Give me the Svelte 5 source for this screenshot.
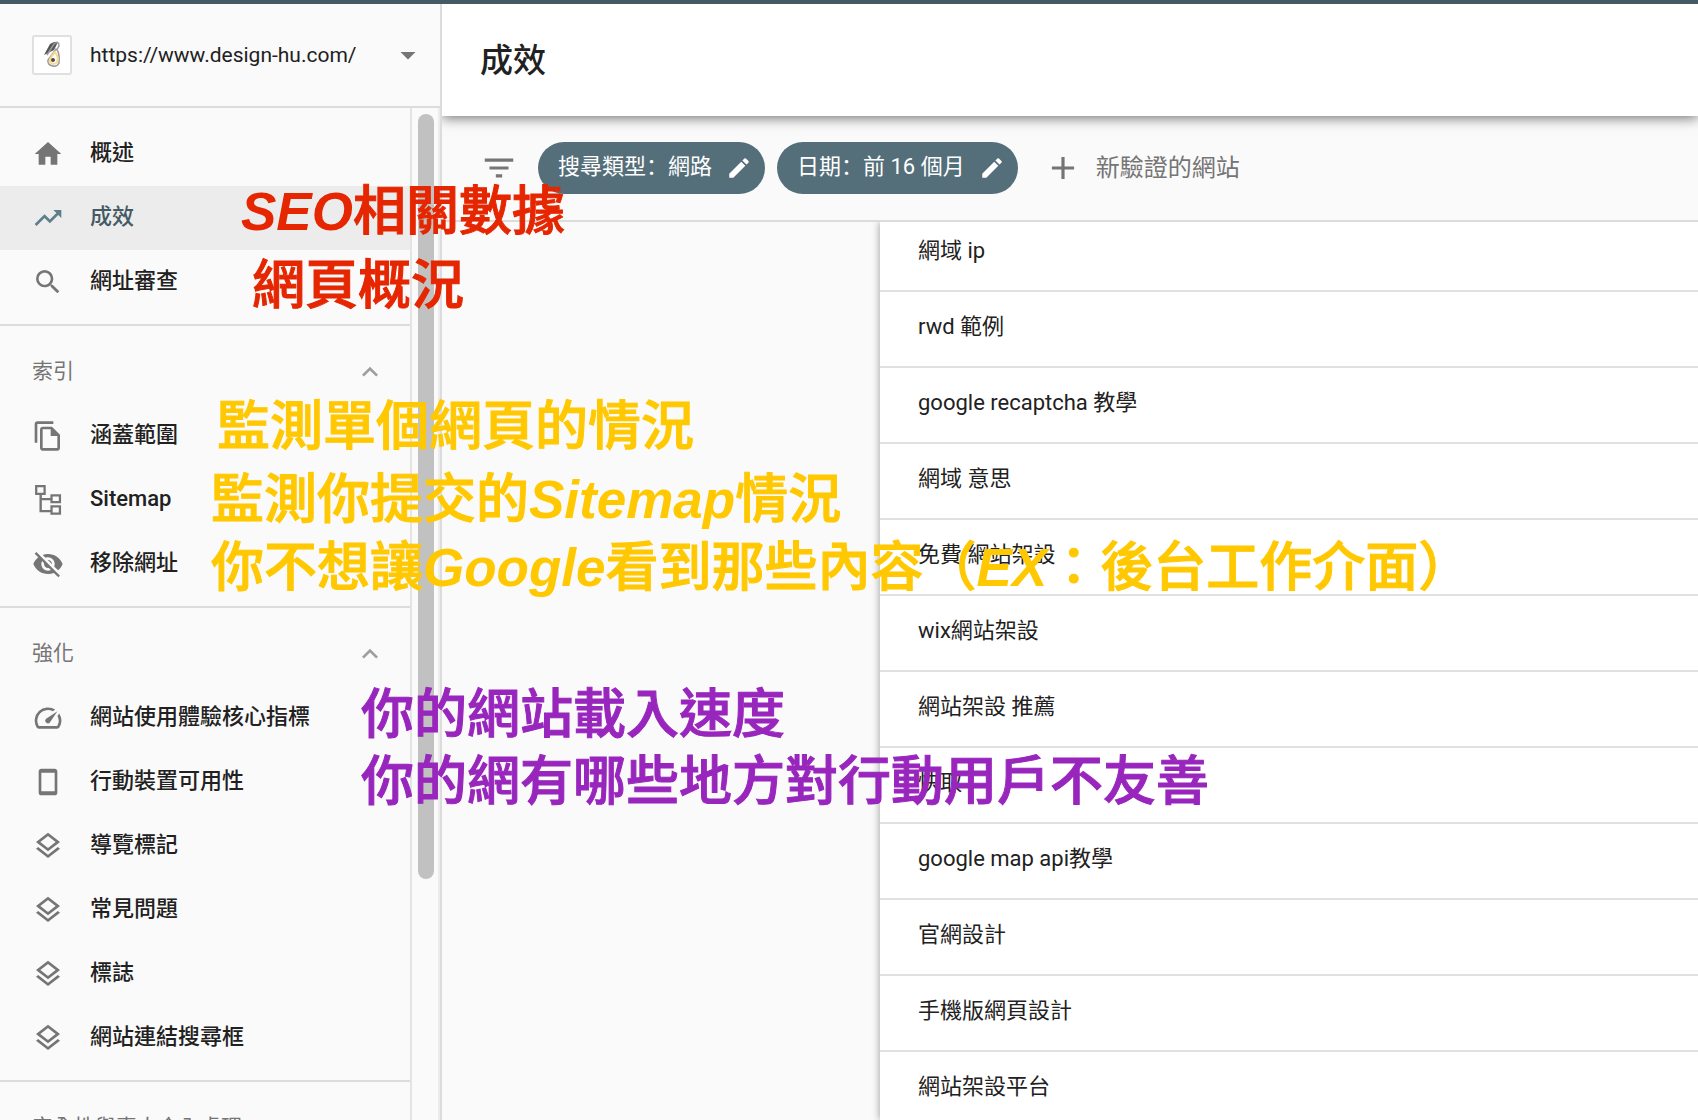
<script lang="ts">
	const icons = {
		home: 'M10 20v-6h4v6h5v-8h3L12 3 2 12h3v8z',
		trend: 'M16 6l2.29 2.29-4.88 4.88-4-4L2 16.59 3.41 18l6-6 4 4 6.3-6.29L22 12V6z',
		search:
			'M15.5 14h-.79l-.28-.27A6.47 6.47 0 0 0 16 9.5 6.5 6.5 0 1 0 9.5 16c1.61 0 3.09-.59 4.23-1.57l.27.28v.79l5 4.99L20.49 19l-4.99-5zm-6 0C7.01 14 5 11.99 5 9.5S7.01 5 9.5 5 14 7.01 14 9.5 11.99 14 9.5 14z',
		copy: 'M16 1H4c-1.1 0-2 .9-2 2v14h2V3h12V1zm-1 4H8c-1.1 0-1.99.9-1.99 2L6 21c0 1.1.89 2 1.99 2H19c1.1 0 2-.9 2-2V11l-6-6zm4 16H8V7h6v5h5v9z',
		tree: 'M2.3.8h8v7.4H7.4v2.3h6.4V7.7h8v6.7h-8v-2.2H7.4v7.3h6.4v-3.6h8V23h-8v-1.9H5.6V8.2H2.3zm1.7 1.7v4h4.6v-4zm11.5 6.9v3.3h4.6V9.4zm0 8.2v3.7h4.6v-3.7z',
		hidden:
			'M12 7c2.76 0 5 2.24 5 5 0 .65-.13 1.26-.36 1.83l2.92 2.92c1.51-1.26 2.7-2.89 3.43-4.75-1.73-4.39-6-7.5-11-7.5-1.4 0-2.74.25-3.98.7l2.16 2.16C10.74 7.13 11.35 7 12 7zM2 4.27l2.28 2.28.46.46C3.08 8.3 1.78 10.02 1 12c1.73 4.39 6 7.5 11 7.5 1.55 0 3.03-.3 4.38-.84l.42.42L19.73 22 21 20.73 3.27 3 2 4.27zM7.53 9.8l1.55 1.55c-.05.21-.08.43-.08.65 0 1.66 1.34 3 3 3 .22 0 .44-.03.65-.08l1.55 1.55c-.67.33-1.41.53-2.2.53-2.76 0-5-2.24-5-5 0-.79.2-1.53.53-2.2zm4.31-.78l3.15 3.15.02-.16c0-1.66-1.34-3-3-3l-.17.01z',
		speed:
			'M20.38 8.57l-1.23 1.85a8 8 0 0 1-.22 7.58H5.07A8 8 0 0 1 15.58 6.85l1.85-1.23A10 10 0 0 0 3.35 19a2 2 0 0 0 1.72 1h13.85a2 2 0 0 0 1.74-1 10 10 0 0 0-.27-10.44zm-9.79 6.84a2 2 0 0 0 2.83 0l5.66-8.49-8.49 5.66a2 2 0 0 0 0 2.83z',
		phone:
			'M7 2h10c1.1 0 2 .9 2 2v16c0 1.1-.9 2-2 2H7c-1.1 0-2-.9-2-2V4c0-1.1.9-2 2-2zm0 3v14h10V5z',
		layers:
			'M11.99 18.54l-7.37-5.73L3 14.07l9 7 9-7-1.63-1.27zM12 16l7.36-5.73L21 9l-9-7-9 7 1.63 1.27L12 16zm0-11.47L17.74 9 12 13.47 6.26 9 12 4.53z',
		up: 'M12 8l-6 6 1.41 1.41L12 10.83l4.59 4.58L18 14z',
		down: 'M7 10l5 5 5-5z',
		filter: 'M10 18h4v-2h-4v2zM3 6v2h18V6H3zm3 7h12v-2H6v2z',
		plus: 'M19 13h-6v6h-2v-6H5v-2h6V5h2v6h6v2z',
		edit: 'M3 17.25V21h3.75L17.81 9.94l-3.75-3.75L3 17.25zM20.71 7.04a1 1 0 0 0 0-1.41l-2.34-2.34a1 1 0 0 0-1.41 0l-1.83 1.83 3.75 3.75 1.83-1.83z'
	};

	type IconName = keyof typeof icons;
	type Section = { title?: string; items: { label: string; icon: IconName }[] };

	const sections: Section[] = [
		{
			items: [
				{ label: '概述', icon: 'home' },
				{ label: '成效', icon: 'trend' },
				{ label: '網址審查', icon: 'search' }
			]
		},
		{
			title: '索引',
			items: [
				{ label: '涵蓋範圍', icon: 'copy' },
				{ label: 'Sitemap', icon: 'tree' },
				{ label: '移除網址', icon: 'hidden' }
			]
		},
		{
			title: '強化',
			items: [
				{ label: '網站使用體驗核心指標', icon: 'speed' },
				{ label: '行動裝置可用性', icon: 'phone' },
				{ label: '導覽標記', icon: 'layers' },
				{ label: '常見問題', icon: 'layers' },
				{ label: '標誌', icon: 'layers' },
				{ label: '網站連結搜尋框', icon: 'layers' }
			]
		},
		{ title: '安全性與專人介入處理', items: [] }
	];

	const filters = ['搜尋類型：網路', '日期：前 16 個月'];

	const queries = [
		'網域 ip',
		'rwd 範例',
		'google recaptcha 教學',
		'網域 意思',
		'免費 網站架設',
		'wix網站架設',
		'網站架設 推薦',
		'快取',
		'google map api教學',
		'官網設計',
		'手機版網頁設計',
		'網站架設平台'
	];

	let current = $state('成效');
	let closed = $state<string[]>([]);

	function toggle(title: string) {
		closed = closed.includes(title) ? closed.filter((t) => t !== title) : [...closed, title];
	}
</script>

{#snippet icon(name: IconName)}
	<svg class="icon" viewBox="0 0 24 24" aria-hidden="true"><path fill-rule="evenodd" d={icons[name]} /></svg>
{/snippet}

<div class="app">
	<div class="topbar"></div>
	<div class="body">
		<aside class="sidebar">
			<button class="property">
				<span class="favicon">
					<svg viewBox="0 0 36 36" aria-hidden="true">
						<path d="M10 18 L16 7 Q21 4 24 5 L20 13 Z" fill="#555" />
						<path d="M13 18 L20 7 Q25 3 25 9 L21 16" fill="none" stroke="#999" stroke-width="1.5" />
						<path d="M22 12 Q26 15 25 26 Q23 30 19 29 Q13 28 14 23 Z" fill="#fff" stroke="#999" stroke-width="1.5" />
						<path d="M21 15 Q25 20 23 25 Q20 29 16 25 Q15 22 21 15 Z" fill="#fff" stroke="#f9d98a" stroke-width="2" />
						<circle cx="19" cy="23" r="2" fill="#4c4a45" />
					</svg>
				</span>
				<span class="url">https://www.design-hu.com/</span>
				{@render icon('down')}
			</button>
			<div class="scroller">
				<nav class="nav">
					{#each sections as s}
						<section>
							{#if s.title}
								<button class="section-title" onclick={() => toggle(s.title!)}>
									<span>{s.title}</span>
									{@render icon('up')}
								</button>
							{/if}
							{#if !closed.includes(s.title ?? '')}
								{#each s.items as item}
									<a
										href="#{item.label}"
										class="item"
										class:active={item.label === current}
										onclick={() => (current = item.label)}
									>
										{@render icon(item.icon)}
										<span>{item.label}</span>
									</a>
								{/each}
							{/if}
						</section>
					{/each}
				</nav>
				<div class="track"><div class="thumb"></div></div>
			</div>
		</aside>

		<main class="main">
			<header class="header"><h1>成效</h1></header>
			<div class="filters">
				{@render icon('filter')}
				<div class="chips">
					{#each filters as f}
						<button class="chip"><span>{f}</span>{@render icon('edit')}</button>
					{/each}
				</div>
				<button class="add">{@render icon('plus')}<span>新驗證的網站</span></button>
			</div>
			<div class="content">
				<div class="gutter"></div>
				<div class="card">
					<table>
						<tbody>
							{#each queries as q}
								<tr><td>{q}</td></tr>
							{/each}
						</tbody>
					</table>
				</div>
			</div>
		</main>
	</div>

	<p class="note red n1"><em>SEO</em>相關數據</p>
	<p class="note red n2">網頁概況</p>
	<p class="note yellow n3">監測單個網頁的情況</p>
	<p class="note yellow n4">監測你提交的<em>Sitemap</em>情況</p>
	<p class="note yellow n5">你不想讓<em>Google</em>看到那些內容（<em>EX</em>：後台工作介面）</p>
	<p class="note purple n6">你的網站載入速度</p>
	<p class="note purple n7">你的網有哪些地方對行動用戶不友善</p>
</div>

<style>
	:global(body) {
		margin: 0;
		background: #fafafa;
	}

	.app {
		position: relative;
		display: flex;
		flex-direction: column;
		height: 100vh;
		overflow: hidden;
		font-family: Roboto, 'Noto Sans CJK TC', sans-serif;
		font-size: 22px;
		line-height: 32px;
		color: #212121;
	}

	button {
		border: 0;
		padding: 0;
		background: none;
		font: inherit;
		color: inherit;
		text-align: left;
		cursor: pointer;
	}

	.icon {
		flex: none;
		width: 32px;
		height: 32px;
		fill: #757575;
	}

	.topbar {
		flex: none;
		height: 4px;
		background: #455a64;
	}

	.body {
		flex: 1;
		display: flex;
		min-height: 0;
	}

	/* sidebar */
	.sidebar {
		flex: none;
		display: flex;
		flex-direction: column;
		width: 440px;
		border-right: 2px solid #dcdcdc;
		background: #fafafa;
	}

	.property {
		flex: none;
		display: flex;
		align-items: center;
		height: 104px;
		padding: 0 14px 0 32px;
		border-bottom: 2px solid #dcdcdc;
		box-sizing: border-box;
		font-size: 21px;
	}

	.property .icon {
		width: 36px;
		height: 36px;
	}

	.favicon {
		display: flex;
		width: 36px;
		height: 36px;
		margin-right: 18px;
		border: 2px solid #e0e0e0;
		border-radius: 3px;
		background: #fff;
	}

	.url {
		flex: 1;
	}

	.scroller {
		flex: 1;
		display: flex;
		min-height: 0;
	}

	.nav {
		flex: 1;
		overflow: hidden;
	}

	section {
		padding: 14px 0 10px;
		border-bottom: 2px solid #dcdcdc;
	}

	.item,
	.section-title {
		display: flex;
		align-items: center;
		width: 100%;
		height: 64px;
		padding-left: 32px;
		box-sizing: border-box;
	}

	.item {
		gap: 26px;
		font-weight: 500;
		color: inherit;
		text-decoration: none;
	}

	.item span,
	.section-title span,
	.chip span {
		padding-bottom: 2px;
	}

	.item.active {
		background: #ececec;
		color: #455a64;
	}

	.item.active .icon {
		fill: #607d8b;
	}

	.section-title {
		justify-content: space-between;
		padding-right: 24px;
		font-size: 21px;
		color: #757575;
	}

	.section-title .icon {
		fill: #9e9e9e;
	}

	.track {
		width: 16px;
		padding: 6px 4px 0 6px;
		border-left: 2px solid #e4e4e4;
		border-right: 2px solid #ececec;
	}

	.thumb {
		height: 76%;
		border-radius: 8px;
		background: #c1c1c1;
	}

	/* main column */
	.main {
		flex: 1;
		display: flex;
		flex-direction: column;
		min-width: 0;
		overflow: hidden;
	}

	.header {
		flex: none;
		display: flex;
		align-items: center;
		height: 112px;
		padding-left: 38px;
		background: #fff;
		box-shadow: 0 2px 12px rgba(0, 0, 0, 0.55);
	}

	h1 {
		margin: 0;
		padding-top: 2px;
		font-size: 33px;
		font-weight: 500;
		line-height: 48px;
	}

	.filters {
		flex: none;
		display: flex;
		align-items: center;
		height: 104px;
		padding-left: 38px;
		border-bottom: 2px solid #dcdcdc;
	}

	.filters > .icon,
	.add .icon {
		width: 38px;
		height: 38px;
	}

	.chips {
		display: flex;
		gap: 12px;
		margin: 0 26px 0 20px;
	}

	.chip {
		display: flex;
		align-items: center;
		gap: 14px;
		height: 52px;
		padding: 0 13px 0 20px;
		border-radius: 26px;
		background: #546e7a;
		font-family: Roboto, 'Noto Sans CJK SC', sans-serif;
		color: #fff;
	}

	.chip .icon {
		width: 26px;
		height: 26px;
		fill: #fff;
	}

	.add {
		display: flex;
		align-items: center;
		gap: 14px;
		font-size: 24px;
		color: #757575;
	}

	.content {
		flex: 1;
		display: flex;
		min-height: 0;
		overflow: hidden;
	}

	.gutter {
		flex: none;
		width: 438px;
	}

	.card {
		flex: 1;
		background: #fff;
		box-shadow: 0 0 8px rgba(0, 0, 0, 0.4);
	}

	/* list is scrolled a little under the filter bar */
	table {
		width: 100%;
		margin-top: -6px;
		border-collapse: separate;
		border-spacing: 0;
	}

	td {
		height: 70px;
		padding: 0 0 4px 38px;
		border-bottom: 2px solid #e0e0e0;
	}

	/* handwritten notes over the page */
	.note {
		position: absolute;
		margin: 0;
		font-family: 'Noto Sans CJK TC', sans-serif;
		font-size: 53px;
		font-weight: 500;
		line-height: 60px;
		white-space: nowrap;
		-webkit-text-stroke: 1px currentColor;
	}

	.note em {
		font-family: 'Liberation Sans', sans-serif;
		font-weight: 700;
		-webkit-text-stroke: 0;
	}

	.red {
		color: #e52600;
	}

	.yellow {
		color: #ffc800;
	}

	.purple {
		color: #9826bd;
	}

	.n1 {
		left: 241px;
		top: 177px;
	}

	.n2 {
		left: 252px;
		top: 251px;
	}

	.n3 {
		left: 217px;
		top: 392px;
	}

	.n4 {
		left: 211px;
		top: 465px;
	}

	.n5 {
		left: 211px;
		top: 533px;
	}

	.n6 {
		left: 361px;
		top: 680px;
	}

	.n7 {
		left: 361px;
		top: 747px;
	}
</style>
